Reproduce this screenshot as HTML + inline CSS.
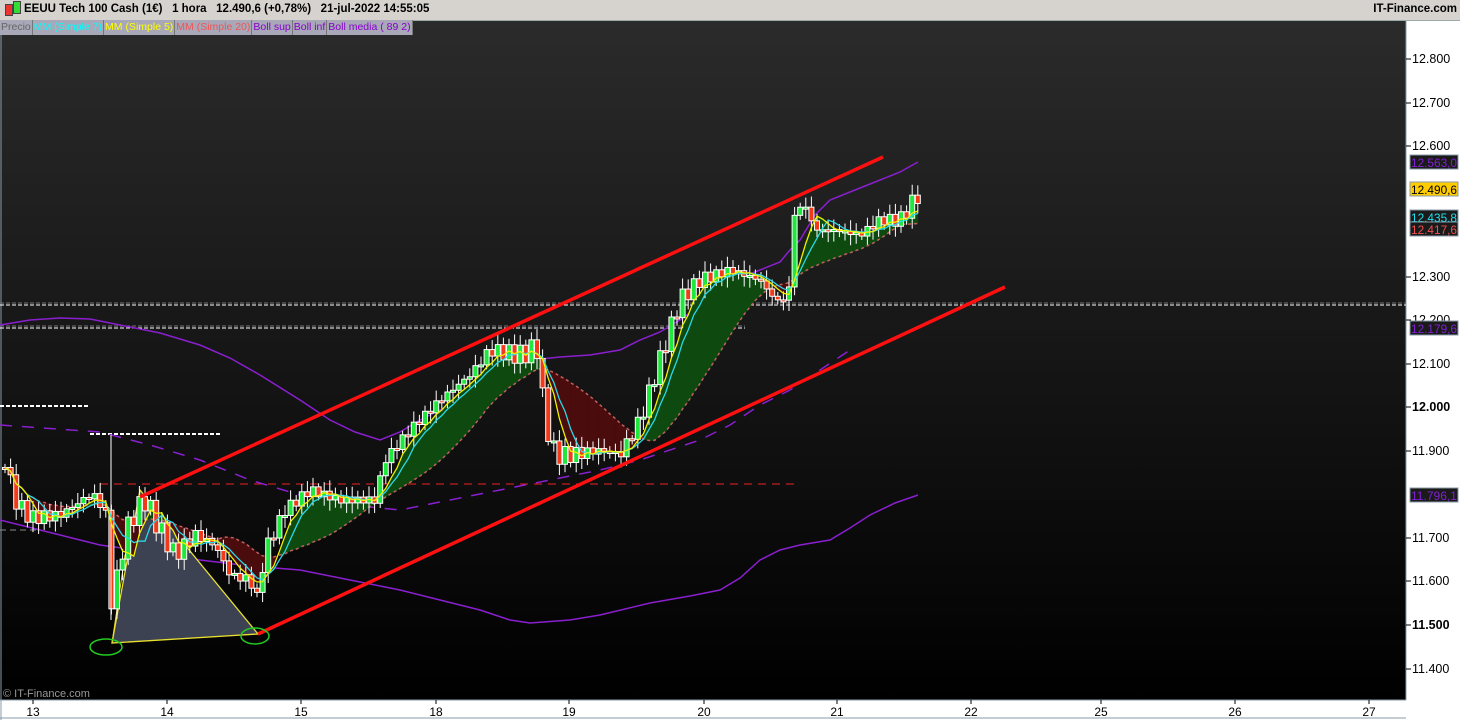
<!DOCTYPE html>
<html><head><meta charset="utf-8"><style>
html,body{margin:0;padding:0;width:1460px;height:720px;overflow:hidden;background:#fff;font-family:"Liberation Sans",sans-serif}
#hdr{position:absolute;left:0;top:0;width:1460px;height:20px;background:#d6d3ce;border-bottom:1px solid #9aa;font-size:11.5px;font-weight:bold;color:#000}
#leg{position:absolute;left:0;top:20px;height:15px;font-size:10.5px;display:flex;z-index:3}
#leg span{background:#a8a8b8;border-right:1px solid #777;padding:0 1px;line-height:15px}
svg{position:absolute;left:0;top:0}
</style></head><body>
<svg id="s" width="1460" height="720" xmlns="http://www.w3.org/2000/svg">
<defs><linearGradient id="bg" x1="0" y1="0" x2="0" y2="1"><stop offset="0" stop-color="#2b2b2b"/><stop offset="1" stop-color="#000"/></linearGradient></defs>
<rect x="0" y="20" width="1406" height="680" fill="url(#bg)"/>
<rect x="1406" y="20" width="54" height="680" fill="#fff"/>
<line x1="1406" y1="20" x2="1406" y2="700" stroke="#8a9aa8"/>
<rect x="0" y="700" width="1406" height="20" fill="#fff"/>
<line x1="0" y1="700" x2="1406" y2="700" stroke="#8a9aa8"/>
<line x1="0" y1="718" x2="1406" y2="718" stroke="#8a9aa8"/>
<line x1="1" y1="20" x2="1" y2="720" stroke="#8a9aa8"/>
<g id="g"></g>
<text x="3" y="697" fill="#999" font-size="11">© IT-Finance.com</text>
</svg>
<div id="hdr"><span style="position:absolute;left:5px;top:4px;width:6px;height:10px;background:#e33;border:1px solid #444"></span><span style="position:absolute;left:13px;top:1px;width:6px;height:11px;background:#3d3;border:1px solid #444"></span><span style="position:absolute;left:24px;top:3px;white-space:pre">EEUU Tech 100 Cash (1€)   1 hora   12.490,6 (+0,78%)   21-jul-2022 14:55:05</span><span style="position:absolute;right:3px;top:3px">IT-Finance.com</span></div>
<div id="leg"><span style="color:#666">Precio</span><span style="color:#0ff">MM (Simple 7)</span><span style="color:#ff0">MM (Simple 5)</span><span style="color:#e55">MM (Simple 20)</span><span style="color:#80c">Boll sup</span><span style="color:#80c">Boll inf</span><span style="color:#80c">Boll media ( 89 2)</span></div>
<script>
const g=document.getElementById('g');let h='';
function pl(pts){return pts.map(p=>p.join(',')).join(' ')}
function interp(pts,x){for(let i=0;i<pts.length-1;i++){if(x>=pts[i][0]&&x<=pts[i+1][0]){let t=(x-pts[i][0])/(pts[i+1][0]-pts[i][0]);return pts[i][1]+t*(pts[i+1][1]-pts[i][1]);}}return pts[pts.length-1][1];}
h+='<line x1="0" y1="305" x2="1406" y2="305" stroke="#fff" stroke-dasharray="4,2"/><line x1="0" y1="303" x2="1406" y2="303" stroke="#777" stroke-dasharray="4,2"/>';
h+='<line x1="0" y1="328" x2="745" y2="328" stroke="#fff" stroke-dasharray="4,2"/><line x1="0" y1="326" x2="745" y2="326" stroke="#777" stroke-dasharray="4,2"/>';
h+='<line x1="0" y1="406" x2="90" y2="406" stroke="#fff" stroke-width="2" stroke-dasharray="4,2"/>';
h+='<line x1="90" y1="434" x2="222" y2="434" stroke="#fff" stroke-width="2" stroke-dasharray="4,2"/>';
h+='<line x1="100" y1="484" x2="795" y2="484" stroke="#e22" stroke-dasharray="8,6"/>';
h+='<line x1="0" y1="530" x2="40" y2="530" stroke="#888" stroke-dasharray="6,4"/>';
const up=[[0,325],[30,320],[60,318],[90,319],[120,325],[160,333],[200,345],[230,358],[260,375],[300,400],[330,420],[355,432],[380,440],[400,432],[420,420],[470,395],[500,372],[530,360],[560,357],[590,355],[620,350],[640,340],[660,332],[680,320],[700,305],[720,290],[740,278],[760,270],[780,262],[790,250],[800,240],[815,215],[830,200],[855,190],[880,180],[900,172],[918,162]];
const lo=[[0,520],[40,530],[100,545],[150,552],[200,560],[250,566],[300,570],[350,580],[400,590],[440,600],[480,610],[510,620],[530,623],[570,620],[600,615],[650,603],[690,596],[720,590],[740,578],[760,560],[780,550],[800,545],[830,540],[850,528],[870,515],[895,503],[918,495]];
const md=[[0,425],[100,432],[150,445],[200,460],[250,480],[300,495],[350,505],[400,510],[450,500],[500,490],[560,478],[600,470],[640,460],[700,440],[730,425],[760,405],[790,390],[820,370],[850,350]];
h+='<polyline points="'+pl(up)+'" fill="none" stroke="#8a1fd0" stroke-width="1.5"/>';
h+='<polyline points="'+pl(lo)+'" fill="none" stroke="#8a1fd0" stroke-width="1.5"/>';
h+='<polyline points="'+pl(md)+'" fill="none" stroke="#8a1fd0" stroke-width="1.5" stroke-dasharray="12,10"/>';
h+='<polygon points="112,643 140,490 258,634" fill="#3d4252" stroke="#e8e030" stroke-width="1.3"/>';
h+='<polyline points="112,643 125,555 135,540 140,490" fill="none" stroke="#e8e030"/>';
const pp=[[5,460],[15,500],[30,518],[60,515],[90,495],[105,505],[112,610],[120,560],[130,520],[145,500],[160,530],[175,555],[195,535],[215,545],[230,575],[250,580],[258,600],[265,550],[285,510],[310,490],[340,500],[375,500],[385,460],[410,430],[440,400],[470,375],[490,350],[520,355],[537,348],[545,420],[555,455],[570,455],[600,450],[620,455],[640,420],[660,360],[680,300],[700,280],[730,270],[760,280],[775,300],[788,300],[795,210],[805,205],[815,230],[835,230],[860,235],[880,220],[900,220],[918,195]];
let cl=[];const X0=5,DX=5.6;let xs=[];
for(let x=X0;x<=918;x+=DX){xs.push(x);let v=interp(pp,x)+Math.sin(x*1.7)*7+Math.sin(x*0.53)*4;cl.push(v);}
function ma(n){return cl.map((v,i)=>{let s=0,c=0;for(let j=Math.max(0,i-n+1);j<=i;j++){s+=cl[j];c++}return s/c;});}
const m5=ma(5),m7=ma(7),m20=ma(20);
for(let i=1;i<xs.length;i++){let up5=(m5[i]+m5[i-1])<(m20[i]+m20[i-1]);h+='<polygon points="'+xs[i-1]+','+m5[i-1]+' '+xs[i]+','+m5[i]+' '+xs[i]+','+m20[i]+' '+xs[i-1]+','+m20[i-1]+'" fill="'+(up5?'#0e4a10':'#4a0c0c')+'" stroke="'+(up5?'#0e4a10':'#4a0c0c')+'" stroke-width="0.6"/>';}
h+='<polyline points="'+pl(xs.map((x,i)=>[x,m20[i]]))+'" fill="none" stroke="#c06060" stroke-width="1.5" stroke-dasharray="3,3"/>';
for(let i=0;i<xs.length;i++){let o=i?cl[i-1]:cl[i],c=cl[i];let t=Math.min(o,c),b=Math.max(o,c);if(b-t<2){b=t+2}let wh=6+Math.abs(Math.sin(i*2.3))*12;let x=xs[i];
h+='<line x1="'+x+'" y1="'+(t-wh*0.6)+'" x2="'+x+'" y2="'+(b+wh*0.6)+'" stroke="#fff"/>';
h+='<rect x="'+(x-2.5)+'" y="'+t+'" width="5" height="'+(b-t)+'" fill="'+(c<o?'#1ee83c':'#f03a1a')+'" stroke="#fff" stroke-width="1"/>';}
h+='<line x1="111" y1="435" x2="111" y2="620" stroke="#fff"/>';
h+='<polyline points="'+pl(xs.map((x,i)=>[x,m7[i]]))+'" fill="none" stroke="#2ad8e8" stroke-width="1.3"/>';
h+='<polyline points="'+pl(xs.map((x,i)=>[x,m5[i]]))+'" fill="none" stroke="#f0f000" stroke-width="1.3"/>';
h+='<line x1="140" y1="497" x2="883" y2="157" stroke="#ff1010" stroke-width="3.5"/>';
h+='<line x1="258" y1="634" x2="1005" y2="287" stroke="#ff1010" stroke-width="3.5"/>';
h+='<ellipse cx="106" cy="647" rx="16" ry="8" fill="none" stroke="#2c2" stroke-width="1.5"/><ellipse cx="255" cy="636" rx="14" ry="8" fill="none" stroke="#2c2" stroke-width="1.5"/>';
const yl=[['12.800',59],['12.700',103],['12.600',146],['12.300',277],['12.200',320],['12.100',364],['12.000',407,1],['11.900',451],['11.700',538],['11.600',581],['11.500',625,1],['11.400',669]];
yl.forEach(a=>{h+='<line x1="1406" y1="'+a[1]+'" x2="1411" y2="'+a[1]+'" stroke="#000"/><text x="1412" y="'+(a[1]+4)+'" font-size="12.5" '+(a[2]?'font-weight="bold"':'')+'>'+a[0]+'</text>';});
const bx=[['12.563,0',162,'#1a1a1a','#8020d0'],['12.490,6',189,'#ffcc00','#000'],['12.435,8',217,'#1a1a1a','#20e0f0'],['12.417,6',229,'#1a1a1a','#f05050'],['12.179,6',328,'#1a1a1a','#8020d0'],['11.796,1',495,'#1a1a1a','#8020d0']];
bx.forEach(b=>{h+='<rect x="1410" y="'+(b[1]-7)+'" width="48" height="14" fill="'+b[2]+'" stroke="#8a9aa8"/><text x="1411" y="'+(b[1]+5)+'" font-size="12" textLength="46" lengthAdjust="spacingAndGlyphs" fill="'+b[3]+'">'+b[0]+'</text>';});
[['13',33],['14',167],['15',301],['18',436],['19',569],['20',704],['21',837],['22',971],['25',1101],['26',1235],['27',1369]].forEach(a=>{h+='<line x1="'+a[1]+'" y1="700" x2="'+a[1]+'" y2="704" stroke="#000"/><text x="'+a[1]+'" y="716" font-size="12" text-anchor="middle">'+a[0]+'</text>';});
g.innerHTML=h;
</script>
</body></html>
